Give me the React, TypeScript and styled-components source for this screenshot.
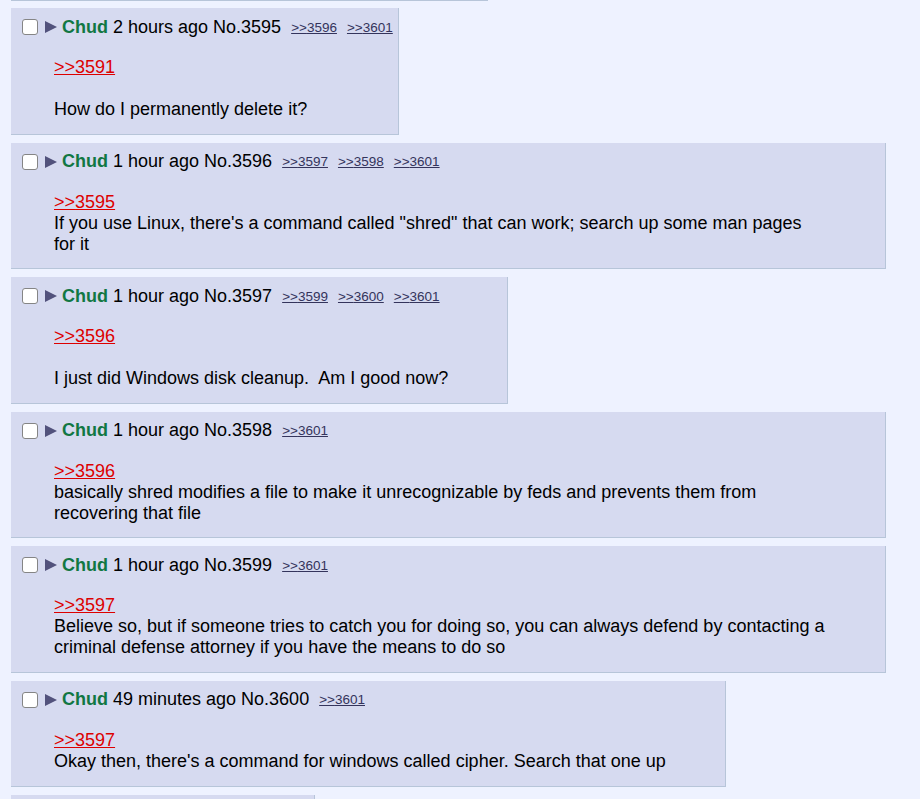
import React from 'react'
import styled, { createGlobalStyle } from 'styled-components'

interface PostData {
  no: number
  time: string
  backlinks: number[]
  quote: number
  gap?: boolean
  text: string
}

const posts: PostData[] = [
  { no: 3595, time: '2 hours ago', backlinks: [3596, 3601], quote: 3591, gap: true, text: 'How do I permanently delete it?' },
  {
    no: 3596,
    time: '1 hour ago',
    backlinks: [3597, 3598, 3601],
    quote: 3595,
    text: 'If you use Linux, there\'s a command called "shred" that can work; search up some man pages for it',
  },
  {
    no: 3597,
    time: '1 hour ago',
    backlinks: [3599, 3600, 3601],
    quote: 3596,
    gap: true,
    text: 'I just did Windows disk cleanup.\u00a0 Am I good now?',
  },
  {
    no: 3598,
    time: '1 hour ago',
    backlinks: [3601],
    quote: 3596,
    text: 'basically shred modifies a file to make it unrecognizable by feds and prevents them from recovering that file',
  },
  {
    no: 3599,
    time: '1 hour ago',
    backlinks: [3601],
    quote: 3597,
    text: 'Believe so, but if someone tries to catch you for doing so, you can always defend by contacting a criminal defense attorney if you have the means to do so',
  },
  {
    no: 3600,
    time: '49 minutes ago',
    backlinks: [3601],
    quote: 3597,
    text: "Okay then, there's a command for windows called cipher. Search that one up",
  },
  { no: 3601, time: '45 minutes ago', backlinks: [], quote: 3600, text: 'thanks' },
]

const GlobalStyle = createGlobalStyle`
  html, body {
    margin: 0;
    padding: 0;
    background: #eef2ff;
  }
  body {
    font-family: "Liberation Sans", Arial, sans-serif;
    font-size: 18px;
    color: #000;
  }
`

const Thread = styled.div`
  padding: 0 0 0 11px;
  width: 875px;
`

// bottom edge of the post above, scrolled out of view
const PostStub = styled.div`
  width: 476px;
  height: 0;
  border-bottom: 1px solid #b7c5d9;
  border-right: 1px solid #b7c5d9;
  margin-bottom: 7px;
`

const Reply = styled.div`
  display: table;
  max-width: 875px;
  box-sizing: border-box;
  background: #d6daf0;
  border-right: 1px solid #b7c5d9;
  border-bottom: 1px solid #b7c5d9;
  padding: 8px 5px 0 0;
  margin-bottom: 8px;
`

const PostInfo = styled.div`
  display: flex;
  align-items: center;
  height: 22px;
  white-space: nowrap;
`

const CheckBox = styled.span`
  width: 16px;
  height: 16px;
  box-sizing: border-box;
  margin-left: 11px;
  border: 1px solid #858585;
  border-radius: 3px;
  background: #fff;
`

const Arrow = styled.span`
  width: 0;
  height: 0;
  margin: 0 5px 0 7px;
  border-top: 6px solid transparent;
  border-bottom: 6px solid transparent;
  border-left: 12px solid #52527c;
`

const Name = styled.span`
  color: #117743;
  font-weight: bold;
  margin-right: 5px;
`

const Backlink = styled.a`
  color: #34345c;
  font-size: 13.5px;
  text-decoration: underline;
  margin-left: 10px;
  cursor: pointer;
`

const Message = styled.blockquote`
  margin: 19px 54px 13.6px 43px;
  line-height: 21px;
`

const QuoteLink = styled.a`
  color: #dd0000;
  text-decoration: underline;
  cursor: pointer;
`

const Post: React.FC<{ post: PostData }> = ({ post }) => (
  <Reply>
    <PostInfo>
      <CheckBox />
      <Arrow />
      <Name>Chud</Name>
      <span>
        {post.time} No.{post.no}
      </span>
      {post.backlinks.map((b) => (
        <Backlink key={b}>&gt;&gt;{b}</Backlink>
      ))}
    </PostInfo>
    <Message>
      <QuoteLink>&gt;&gt;{post.quote}</QuoteLink>
      <br />
      {post.gap && <br />}
      {post.text}
    </Message>
  </Reply>
)

export default function App() {
  return (
    <>
      <GlobalStyle />
      <Thread>
        <PostStub />
        {posts.map((p) => (
          <Post key={p.no} post={p} />
        ))}
      </Thread>
    </>
  )
}
